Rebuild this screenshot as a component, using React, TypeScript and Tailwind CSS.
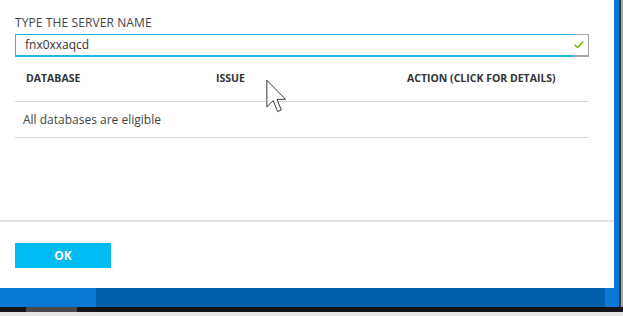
import { Check } from "lucide-react";

const font = { fontFamily: '"Open Sans", "Noto Sans", sans-serif' };

const Pointer = () => (
  <svg
    width="20"
    height="34"
    viewBox="0 0 12 20"
    className="absolute left-[266px] top-[79px]"
  >
    <path
      d="M0.5 0.5 L0.5 16.5 L4.3 12.8 L7 19.3 L9.2 18.4 L6.6 12 L11.7 12 Z"
      fill="#ffffff"
      stroke="#3a3a3a"
      strokeWidth="0.6"
      strokeLinejoin="round"
    />
  </svg>
);

export default function App() {
  return (
    <div
      className="relative w-[623px] h-[316px] overflow-hidden bg-[#dcdcdc] flex flex-col"
      style={font}
    >
      <div className="flex h-[307px]">
        <div className="flex flex-col w-[614px]">
          {/* dialog body */}
          <div className="bg-white h-[288px] flex flex-col">
            <div className="h-[220px] px-[15px] pt-[16px] flex flex-col">
              <div className="text-[12px] leading-[14px] text-[#444] tracking-[0.1px]">
                TYPE THE SERVER NAME
              </div>
              <div className="mt-[4px] h-[23px] w-[574px] flex">
                <div className="flex-1 border-l border-t border-b-2 border-[#22b8ec] flex items-center pl-[9px] text-[12px] text-[#333]">
                  fnx0xxaqcd
                </div>
                <div className="w-[16px] border-t border-b-2 border-r border-[#a6a6a6] flex items-center justify-start">
                  <Check size={12} strokeWidth={3.2} color="#7fba00" />
                </div>
              </div>
              <div className="w-[573px] h-[45px] flex items-center border-b border-[#d6d6d6] text-[10.5px] font-bold text-[#333]">
                <div className="w-[201px] pl-[11px]">DATABASE</div>
                <div className="w-[191px]">ISSUE</div>
                <div>ACTION (CLICK FOR DETAILS)</div>
              </div>
              <div className="w-[573px] h-[36px] flex items-center border-b border-[#d6d6d6] pl-[8px] text-[12px] text-[#444]">
                All databases are eligible
              </div>
            </div>
            <div className="h-[2px] bg-[#e2e2e2]" />
            <div className="flex-1 px-[15px] pt-[21px]">
              <button className="w-[96px] h-[25px] bg-[#00bcf2] text-white text-[12px] font-bold flex items-center justify-center">
                OK
              </button>
            </div>
          </div>
          {/* taskbar */}
          <div className="flex-1 flex">
            <div className="w-[96px] bg-[#0a78d6]" />
            <div className="flex-1 bg-[#005fab]" />
            <div className="w-[9px] bg-[#0a78d6]" />
          </div>
        </div>
        <div className="w-[5px] bg-[#0a78d6]" />
        <div className="w-[2px] bg-[#3a3a3a]" />
        <div className="w-[2px] bg-[#a8a8a8]" />
      </div>
      <div className="h-[5px] bg-[#141414] flex">
        <div className="w-[26px]" />
        <div className="w-[51px] bg-[#4a4a4a]" />
      </div>
      <div className="flex-1 bg-[#e6e6e6]" />
      <Pointer />
    </div>
  );
}
